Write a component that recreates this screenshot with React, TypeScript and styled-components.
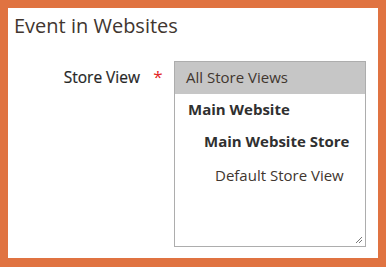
import styled, { createGlobalStyle } from 'styled-components';

const GlobalStyle = createGlobalStyle`
  html, body {
    margin: 0;
    padding: 0;
    background: #e07341;
  }
  body {
    font-family: 'Open Sans', 'Noto Sans', sans-serif;
    color: #303030;
  }
`;

const Frame = styled.div`
  width: 386px;
  height: 267px;
  box-sizing: border-box;
  padding: 8px 8px 9px 8px;
  background: #e07341;
`;

const Panel = styled.section`
  height: 100%;
  background: #fff;
  box-sizing: border-box;
  padding: 4px 0 0 6px;
`;

const Title = styled.h2`
  margin: 0;
  font-size: 20px;
  font-weight: 400;
  color: #41362f;
  line-height: 28px;
`;

const Field = styled.div`
  display: flex;
  align-items: flex-start;
  margin-top: 21px;
`;

const Label = styled.label`
  width: 126px;
  text-align: right;
  font-size: 15.5px;
  font-weight: 400;
  color: #262626;
  line-height: 32px;
  -webkit-text-stroke: 0.2px #262626;
`;

const Required = styled.span`
  width: 34px;
  text-align: center;
  color: #e22626;
  font-size: 17px;
  line-height: 32px;
  padding-left: 2px;
  box-sizing: border-box;
`;

const ListBox = styled.div`
  position: relative;
  width: 192px;
  height: 186px;
  box-sizing: border-box;
  border: 1px solid #adadad;
  background: #fff;
`;

const Option = styled.div<{ $indent: number; $bold?: boolean; $selected?: boolean }>`
  height: 32px;
  line-height: 31px;
  font-size: 15px;
  padding-left: ${(p) => p.$indent}px;
  font-weight: ${(p) => (p.$bold ? 700 : 400)};
  background: ${(p) => (p.$selected ? '#c6c6c6' : 'transparent')};
  color: ${(p) => (p.$bold ? '#303030' : '#41362f')};
  white-space: nowrap;
  &:last-of-type {
    margin-top: 2px;
  }
`;

const Grip = styled.svg`
  position: absolute;
  right: 2px;
  bottom: 2px;
`;

export default function App() {
  return (
    <>
      <GlobalStyle />
      <Frame>
        <Panel>
          <Title>Event in Websites</Title>
          <Field>
            <Label>Store View</Label>
            <Required>*</Required>
            <ListBox>
              <Option $indent={11} $selected>All Store Views</Option>
              <Option $indent={13} $bold>Main Website</Option>
              <Option $indent={29} $bold>Main Website Store</Option>
              <Option $indent={40}>Default Store View</Option>
              <Grip width="8" height="8" viewBox="0 0 8 8">
                <path d="M7 1L1 7M7 4L4 7" stroke="#777" strokeWidth="1" />
              </Grip>
            </ListBox>
          </Field>
        </Panel>
      </Frame>
    </>
  );
}
